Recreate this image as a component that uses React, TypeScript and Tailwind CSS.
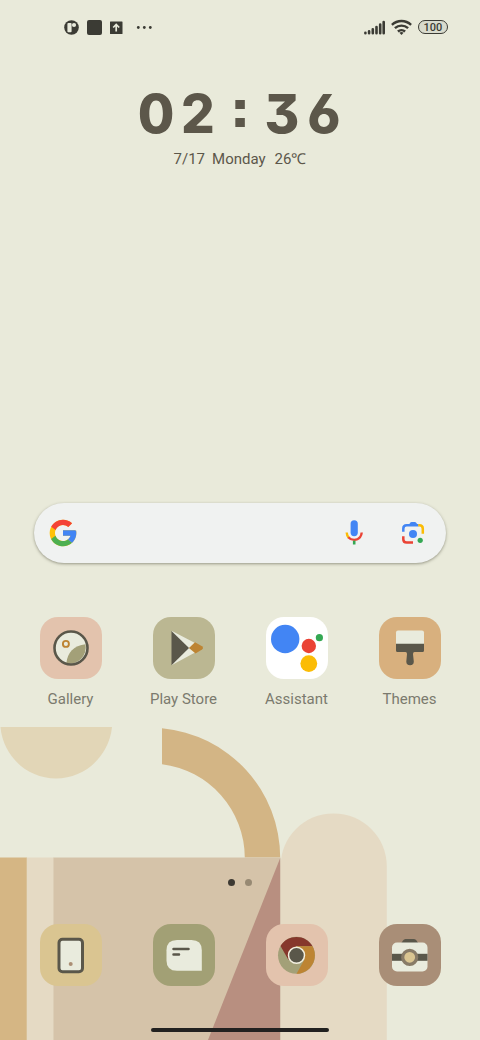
import type { ReactNode } from "react";

function Wallpaper() {
  return (
    <svg viewBox="0 0 480 313" className="absolute bottom-0 left-0 h-auto w-full" aria-hidden="true">
      <path d="M0.5 0H112C109 29 85 51.5 56 51.5S3 29 0.5 0Z" fill="#e2d6b7" />
      <path d="M162 1.300A130 130 0 0 1 280.200 130.500H244.800A94.500 94.500 0 0 0 162 37.200Z" fill="#d3b585" />
      <path d="M280.600 313V139.500C280.600 110 304 86.600 333.500 86.600S386.800 110 386.800 139.500V313Z" fill="#e5dac4" />
      <rect x="0" y="130.500" width="27" height="183" fill="#d5b684" />
      <rect x="26.700" y="130.500" width="27" height="183" fill="#e5dac4" />
      <rect x="53.400" y="130.500" width="227" height="183" fill="#d5c3a9" />
      <path d="M280.200 131V313H208Z" fill="#b88f80" />
    </svg>
  );
}

function StatusBar() {
  return (
    <header className="flex h-[54px] items-center justify-between pr-8 pl-16">
      <div className="flex items-center gap-2">
        <svg width="15" height="16" viewBox="0 0 15 16" aria-label="Notification" role="img">
          <circle cx="7.500" cy="8.500" r="7.300" fill="#3b3b34" />
          <rect x="3.400" y="4" width="4.200" height="9.200" rx="1" fill="#e8eadb" />
          <circle cx="10" cy="6" r="2.100" fill="#e8eadb" />
        </svg>
        <svg width="15" height="16" viewBox="0 0 15 16" aria-label="App notification" role="img">
          <rect x="0" y="1" width="15" height="15" rx="2" fill="#3b3b34" />
        </svg>
        <svg width="13" height="16" viewBox="0 0 13 16" aria-label="Upload" role="img">
          <rect x="0" y="2.500" width="12.500" height="12.500" rx="0.500" fill="#3b3b34" />
          <path d="M6.200 12.500V5.500M3.200 8.500L6.200 5.500L9.200 8.500" stroke="#e8eadb" strokeWidth="1.700" fill="none" />
        </svg>
        <svg width="22" height="16" viewBox="0 0 22 16" aria-label="More notifications" role="img">
          <g fill="#3b3b34">
            <circle cx="7.300" cy="8.500" r="1.400" />
            <circle cx="13.300" cy="8.500" r="1.400" />
            <circle cx="19.300" cy="8.500" r="1.400" />
          </g>
        </svg>
      </div>
      <div className="flex items-center gap-[6px]">
        <svg width="21" height="16" viewBox="0 0 21 16" aria-label="Signal" role="img">
          <path
            d="M1.400 13.700V14.300M5.100 12.200V14.300M8.800 10.200V14.300M12.500 8V14.300M16.200 5.500V14.300M19.700 3V14.300"
            stroke="#3b3b34"
            strokeWidth="2.600"
            strokeLinecap="round"
          />
        </svg>
        <svg width="21" height="16" viewBox="0 0 21 16" aria-label="Wi-Fi" role="img">
          <g fill="none" stroke="#3b3b34" strokeWidth="2.400">
            <path d="M0.900 5.800C6.400 0.700 14.600 0.700 20.100 5.800" />
            <path d="M3.900 9.200C7.700 5.700 13.300 5.700 17.100 9.200" />
            <path d="M6.900 12.500C9 10.600 12 10.600 14.100 12.500" />
          </g>
          <path d="M8.400 13.700Q10.500 12.200 12.600 13.700L10.500 16Z" fill="#3b3b34" />
        </svg>
        <span className="flex h-[14px] w-[30px] items-center justify-center rounded-full border border-[#3b3b34] bg-[#d9dbcd] font-[Roboto,sans-serif] text-[11px] leading-none font-medium text-[#3b3b34]">
          100
        </span>
      </div>
    </header>
  );
}

function Clock() {
  return (
    <section className="flex flex-col items-center text-[#5c574a]">
      <time
        dateTime="02:36"
        className="mt-[34px] flex h-[52px] items-center font-[Inter,sans-serif] text-[53px] leading-[52px] font-extrabold [font-feature-settings:'case','cv03','cv09','ss07']"
      >
        {["0", "2", ":", "3", "6"].map((char, i) => (
          <span key={i} className="w-[42px] text-center">
            {char}
          </span>
        ))}
      </time>
      <p className="mt-2 flex gap-[7px] font-[Roboto,sans-serif] text-[15px] leading-[22px]">
        <span>7/17</span>
        <span>Monday</span>
        <span className="ml-[2px]">26℃</span>
      </p>
    </section>
  );
}

function SearchBar() {
  return (
    <form
      role="search"
      className="mx-[34px] flex h-[60px] items-center rounded-full bg-[#f0f2f1] pr-[19px] pl-[13px] shadow-[0_1px_3px_rgba(70,70,50,0.5)]"
    >
      <svg width="32" height="32" viewBox="0 0 48 48" aria-hidden="true">
        <path fill="#FFC107" d="M43.611 20.083H42V20H24v8h11.303c-1.649 4.657-6.080 8-11.303 8-6.627 0-12-5.373-12-12s5.373-12 12-12c3.059 0 5.842 1.154 7.961 3.039l5.657-5.657C34.046 6.053 29.268 4 24 4 12.955 4 4 12.955 4 24s8.955 20 20 20 20-8.955 20-20c0-1.341-.138-2.650-.389-3.917z" />
        <path fill="#F44336" d="M6.306 14.691l6.571 4.819C14.655 15.108 18.961 12 24 12c3.059 0 5.842 1.154 7.961 3.039l5.657-5.657C34.046 6.053 29.268 4 24 4 16.318 4 9.656 8.337 6.306 14.691z" />
        <path fill="#4CAF50" d="M24 44c5.166 0 9.860-1.977 13.409-5.192l-6.190-5.238C29.211 35.091 26.715 36 24 36c-5.202 0-9.619-3.317-11.283-7.946l-6.522 5.025C9.505 39.556 16.227 44 24 44z" />
        <path fill="#4285F4" d="M43.611 20.083H42V20H24v8h11.303c-.792 2.237-2.231 4.166-4.087 5.571l6.193 5.238C36.971 39.205 44 34 44 24c0-1.341-.138-2.650-.389-3.917z" />
      </svg>
      <input type="text" aria-label="Search" className="h-full min-w-0 flex-1 bg-transparent px-3 text-base outline-none" />
      <button type="button" aria-label="Voice search" className="mr-[31px]">
        <svg width="28" height="28" viewBox="0 0 28 28">
          <rect x="10.600" y="1.200" width="7.200" height="16" rx="3.600" fill="#4285f4" />
          <path d="M6.700 13.500C6.800 15.500 7.500 17.300 8.700 18.600" stroke="#fbbc05" strokeWidth="2.400" fill="none" />
          <path d="M8.300 18.200C11.400 21.700 17 21.700 20 18.200C21.100 16.900 21.600 15.300 21.700 13.500" stroke="#ea4335" strokeWidth="2.400" fill="none" />
          <path d="M14.200 21.700V25.500" stroke="#34a853" strokeWidth="2.600" />
        </svg>
      </button>
      <button type="button" aria-label="Search with camera">
        <svg width="28" height="28" viewBox="0 0 28 28">
          <path d="M4.300 12.700V9.700Q4.300 6.300 7.700 6.300H19.500" stroke="#4285f4" strokeWidth="2.500" fill="none" />
          <path d="M9.500 6.500L11 4Q11.600 3 12.800 3H15.600Q16.800 3 17.400 4L19 6.500Z" fill="#4285f4" />
          <path d="M19.200 6.300H20.300Q23.800 6.300 23.800 9.700V14.800" stroke="#fbbc05" strokeWidth="2.500" fill="none" />
          <path d="M4.300 17.200V20.200Q4.300 23.600 7.700 23.600H14" stroke="#ea4335" strokeWidth="2.500" fill="none" />
          <circle cx="14" cy="15" r="4" fill="#4285f4" />
          <circle cx="21.200" cy="21.300" r="2.600" fill="#34a853" />
        </svg>
      </button>
    </form>
  );
}

interface App {
  name: string;
  tile: string;
  art: ReactNode;
}

const apps: App[] = [
  {
    name: "Gallery",
    tile: "bg-[#e3c3ad]",
    art: (
      <>
        <circle cx="31" cy="31" r="16.500" fill="#e9ebdd" />
        <path d="M26.400 46.500C27 36 34 28.400 45.500 27.300A16.500 16.500 0 0 1 26.400 46.500Z" fill="#a3a078" />
        <circle cx="31" cy="31" r="16.500" fill="none" stroke="#5a574a" strokeWidth="2.600" />
        <circle cx="25.900" cy="26.900" r="3" fill="#e9ebdd" stroke="#bd8433" strokeWidth="1.900" />
      </>
    ),
  },
  {
    name: "Play Store",
    tile: "bg-[#bbb792]",
    art: (
      <>
        <path d="M19 14L43 26.500L36 31L43 35L19 48Z" fill="#e9ebdd" />
        <path d="M18.500 14L36 31L18.500 48.200Z" fill="#5a574a" />
        <path d="M36 31L42 25.300L49 29.200Q51 31 49 32.500L42.500 36.500Z" fill="#bd8433" />
      </>
    ),
  },
  {
    name: "Assistant",
    tile: "bg-white",
    art: (
      <>
        <circle cx="19.200" cy="22" r="14.200" fill="#4285f4" />
        <circle cx="42.800" cy="29" r="7.200" fill="#ea4335" />
        <circle cx="53.400" cy="20.700" r="3.600" fill="#34a853" />
        <circle cx="42.800" cy="46.600" r="8.400" fill="#fbbc05" />
      </>
    ),
  },
  {
    name: "Themes",
    tile: "bg-[#d8b07e]",
    art: (
      <>
        <path d="M17 27V15.500Q17 13.500 19 13.500H43Q45 13.500 45 15.500V27Z" fill="#e9ebdd" />
        <path d="M17 26.800H45V33.500Q45 35 43.500 35H35.500Q34 35 34 37L34.800 44.500A3.700 3.700 0 0 1 27.300 44.500L28 37Q28 35 26.500 35H18.500Q17 35 17 33.500Z" fill="#5a574a" />
      </>
    ),
  },
];

const dock: App[] = [
  {
    name: "Phone",
    tile: "bg-[#dac591]",
    art: (
      <>
        <rect x="19.000" y="15.300" width="23.500" height="32.500" rx="3.500" fill="#e9ebdd" stroke="#5a574a" strokeWidth="3" />
        <circle cx="30.700" cy="40" r="2" fill="#ab8e75" />
      </>
    ),
  },
  {
    name: "Messages",
    tile: "bg-[#a2a075]",
    art: (
      <>
        <path d="M24 16H38.500Q48.800 16 48.800 26.300V46.800H24Q13.500 46.800 13.500 36.500V26.300Q13.500 16 24 16Z" fill="#e9ebdd" />
        <path d="M20.500 25H35.500M20.500 30.400H26" stroke="#5a574a" strokeWidth="2.500" strokeLinecap="round" />
      </>
    ),
  },
  {
    name: "Chrome",
    tile: "bg-[#e3c3ad]",
    art: (
      <g transform="translate(-1 0)">
        <circle cx="31.500" cy="31.300" r="18.500" fill="#a3a078" />
        <path d="M15.500 22A18.500 18.500 0 0 1 47.500 22.300H31.500L23.500 36Z" fill="#86372c" />
        <path d="M31.500 22.300H47.500A18.500 18.500 0 0 1 31.500 49.800L39.500 35.500Z" fill="#bd8433" />
        <circle cx="31.500" cy="31.300" r="8" fill="#5a574a" stroke="#f3efdf" strokeWidth="1.500" />
      </g>
    ),
  },
  {
    name: "Camera",
    tile: "bg-[#a98e77]",
    art: (
      <g transform="translate(-0.500 0)">
        <path d="M22.500 19.500L24.500 16.500Q25.300 15 27 15H35.500Q37.200 15 38 16.500L40 19.500Z" fill="#5a574a" />
        <rect x="13.500" y="18.500" width="35.500" height="29" rx="5" fill="#e9ebdd" />
        <rect x="13.500" y="29.800" width="35.500" height="7" fill="#5a574a" />
        <circle cx="31.200" cy="33.300" r="7" fill="#dac591" stroke="#887b67" strokeWidth="3.200" />
      </g>
    ),
  },
];

function AppRow({ items, labelled }: { items: App[]; labelled: boolean }) {
  return (
    <div className="grid grid-cols-4 px-[14px]">
      {items.map((app) => (
        <button key={app.name} type="button" aria-label={app.name} className="flex flex-col items-center">
          <span className={`size-[62px] overflow-hidden rounded-[18px] ${app.tile}`}>
            <svg viewBox="0 0 62 62" className="size-full" aria-hidden="true">
              {app.art}
            </svg>
          </span>
          {labelled && (
            <span className="mt-[10px] font-[Roboto,sans-serif] text-[15px] leading-5 whitespace-nowrap text-[#7b7a6e]">
              {app.name}
            </span>
          )}
        </button>
      ))}
    </div>
  );
}

export default function App() {
  return (
    <main className="relative isolate flex min-h-screen flex-col overflow-hidden bg-[#e9eada]">
      <div className="absolute inset-0 -z-10">
        <Wallpaper />
      </div>
      <StatusBar />
      <Clock />
      <div className="min-h-8 flex-1" />
      <SearchBar />
      <div className="mt-[54px]">
        <AppRow items={apps} labelled />
      </div>
      <div className="mt-[170px] flex justify-center gap-[10px]">
        <span className="size-[7px] rounded-full bg-[#3d3932]" />
        <span className="size-[7px] rounded-full bg-[#978973]" />
      </div>
      <div className="mt-[38px]">
        <AppRow items={dock} labelled={false} />
      </div>
      <div className="mx-auto mt-[42px] mb-2 h-1 w-[37%] rounded-full bg-[#222120]" />
    </main>
  );
}
